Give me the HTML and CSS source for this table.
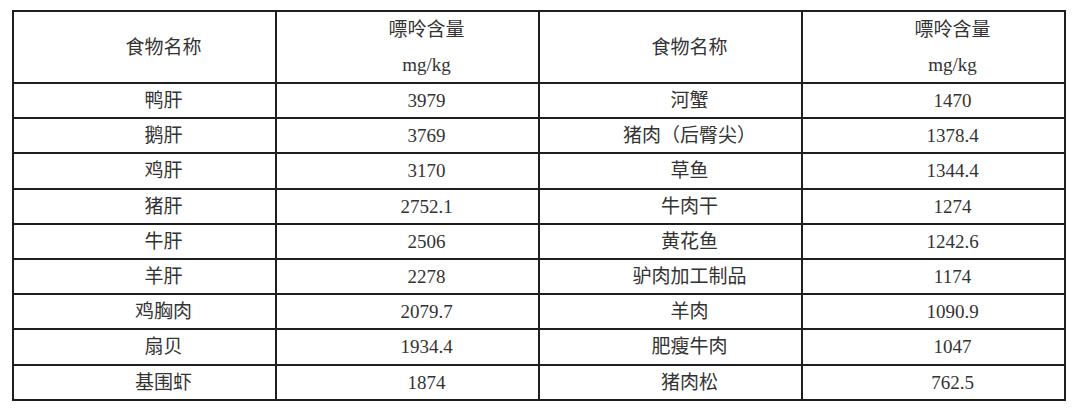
FILE: index.html
```html
<!DOCTYPE html>
<html lang="zh-CN">
<head>
<meta charset="utf-8">
<link rel="stylesheet" href="styles.css">
</head>
<body>
<table class="purine">
  <colgroup><col class="c"><col class="c"><col class="c"><col class="c"></colgroup>
  <thead>
    <tr class="head">
      <th>食物名称</th>
      <th><span class="l">嘌呤含量</span><span class="l">mg/kg</span></th>
      <th>食物名称</th>
      <th><span class="l">嘌呤含量</span><span class="l">mg/kg</span></th>
    </tr>
  </thead>
  <tbody>
    <tr><td>鸭肝</td><td>3979</td><td>河蟹</td><td>1470</td></tr>
    <tr><td>鹅肝</td><td>3769</td><td>猪肉（后臀尖）</td><td>1378.4</td></tr>
    <tr><td>鸡肝</td><td>3170</td><td>草鱼</td><td>1344.4</td></tr>
    <tr><td>猪肝</td><td>2752.1</td><td>牛肉干</td><td>1274</td></tr>
    <tr><td>牛肝</td><td>2506</td><td>黄花鱼</td><td>1242.6</td></tr>
    <tr><td>羊肝</td><td>2278</td><td>驴肉加工制品</td><td>1174</td></tr>
    <tr><td>鸡胸肉</td><td>2079.7</td><td>羊肉</td><td>1090.9</td></tr>
    <tr><td>扇贝</td><td>1934.4</td><td>肥瘦牛肉</td><td>1047</td></tr>
    <tr><td>基围虾</td><td>1874</td><td>猪肉松</td><td>762.5</td></tr>
  </tbody>
</table>
</body>
</html>
```
FILE: styles.css
```css
html, body {
  margin: 0;
  padding: 0;
  background: #ffffff;
}
body {
  padding: 10px 0 0 12px;
}
.purine {
  border-collapse: collapse;
  table-layout: fixed;
  width: 1052px;
  font-family: "Liberation Serif", "Noto Sans CJK SC", serif;
  font-size: 19px;
  color: #333333;
}
.purine .c {
  width: 263px;
}
.purine th,
.purine td {
  border: 2px solid #1e1e1e;
  padding: 0 0 0 38px;
  text-align: center;
  vertical-align: middle;
  font-weight: normal;
  height: 33.2px;
  line-height: 33px;
}
.purine tr.head th {
  height: 68px;
  line-height: 35px;
  padding-top: 0;
}
.purine .l {
  display: block;
}
```
